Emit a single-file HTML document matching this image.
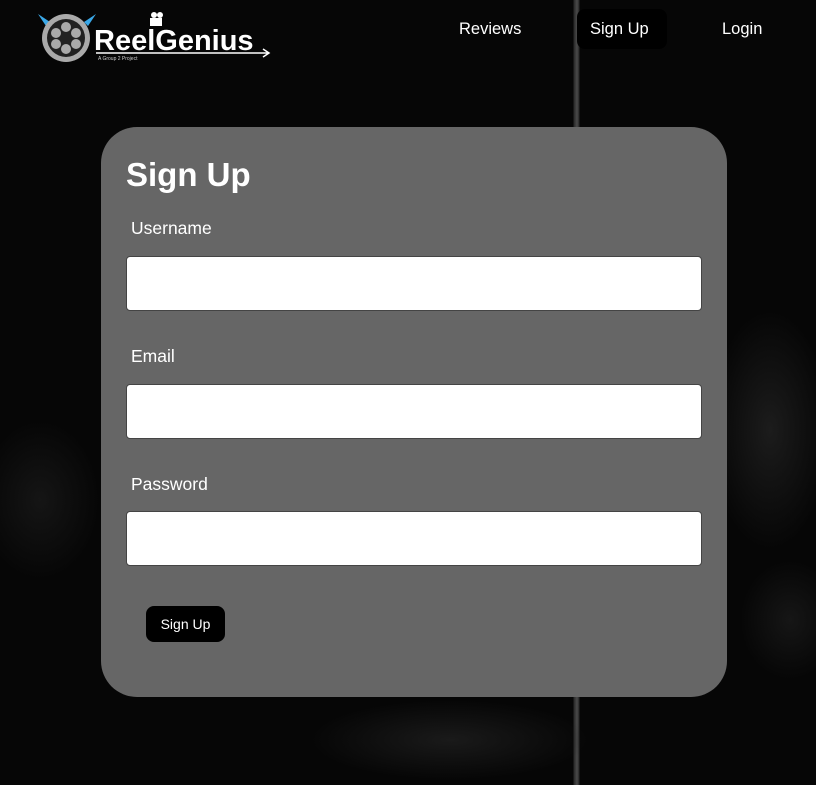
<!DOCTYPE html>
<html><head><style>
body{margin:0;width:816px;height:785px;background:#060606;overflow:hidden;position:relative;font-family:"Liberation Sans",sans-serif;color:#fff}
.bg{position:absolute;inset:0;background:
radial-gradient(ellipse 60px 120px at 770px 430px,#1c1c1c,transparent),
radial-gradient(ellipse 60px 80px at 40px 500px,#151515,transparent),
radial-gradient(ellipse 140px 40px at 450px 740px,#1a1a1a,transparent),
radial-gradient(ellipse 50px 60px at 790px 620px,#161616,transparent),
linear-gradient(90deg,transparent 573px,#2a2a2a 574px,#4a4a4a 577px,#2a2a2a 579px,transparent 580px);}
.nav a{position:absolute;top:20px;font-size:16.5px;color:#fff}
.box{position:absolute;left:101px;top:127px;width:626px;height:570px;background:#666;border-radius:36px}
h1{position:absolute;left:126px;top:156px;margin:0;font-size:33px;font-weight:bold}
.lbl{position:absolute;left:131px;font-size:17.5px}
.in{position:absolute;left:126px;width:574px;height:53px;background:#fff;border:1px solid #444;border-radius:4px}
.btn{position:absolute;left:146px;top:606px;width:79px;height:36px;background:#000;border-radius:8px;font-size:14px;text-align:center;line-height:37px}
</style></head><body>
<div class="bg"></div>
<svg style="position:absolute;left:38px;top:10px" width="240" height="52">
<path d="M0 4 L12 12 L8 16Z M58 4 L46 12 L50 16Z" fill="#3aa8e8"/>
<circle cx="28" cy="28" r="24" fill="#aaa"/><circle cx="28" cy="28" r="19" fill="#222"/>
<circle cx="28" cy="17" r="5" fill="#aaa"/><circle cx="28" cy="39" r="5" fill="#aaa"/><circle cx="18" cy="23" r="5" fill="#aaa"/><circle cx="38" cy="23" r="5" fill="#aaa"/><circle cx="18" cy="34" r="5" fill="#aaa"/><circle cx="38" cy="34" r="5" fill="#aaa"/>
<circle cx="116" cy="5" r="3" fill="#fff"/><circle cx="122" cy="5" r="3" fill="#fff"/><rect x="112" y="8" width="12" height="8" fill="#fff"/>
<text x="56" y="40" font-family="Liberation Sans" font-weight="bold" font-size="29" fill="#fff">ReelGenius</text>
<path d="M58 43 H230 M225 39 L231 43 L225 47" stroke="#fff" stroke-width="1.5" fill="none"/>
<text x="60" y="50" font-size="5" fill="#ccc">A Group 2 Project</text>
</svg>
<div class="nav"><a style="left:459px">Reviews</a>
<div style="position:absolute;left:577px;top:9px;width:90px;height:40px;background:#000;border-radius:8px"></div>
<a style="left:590px">Sign Up</a><a style="left:722px">Login</a></div>
<div class="box"></div>
<h1>Sign Up</h1>
<div class="lbl" style="top:218px">Username</div><div class="in" style="top:256px"></div>
<div class="lbl" style="top:346px">Email</div><div class="in" style="top:384px"></div>
<div class="lbl" style="top:474px">Password</div><div class="in" style="top:511px"></div>
<div class="btn">Sign Up</div>
</body></html>
